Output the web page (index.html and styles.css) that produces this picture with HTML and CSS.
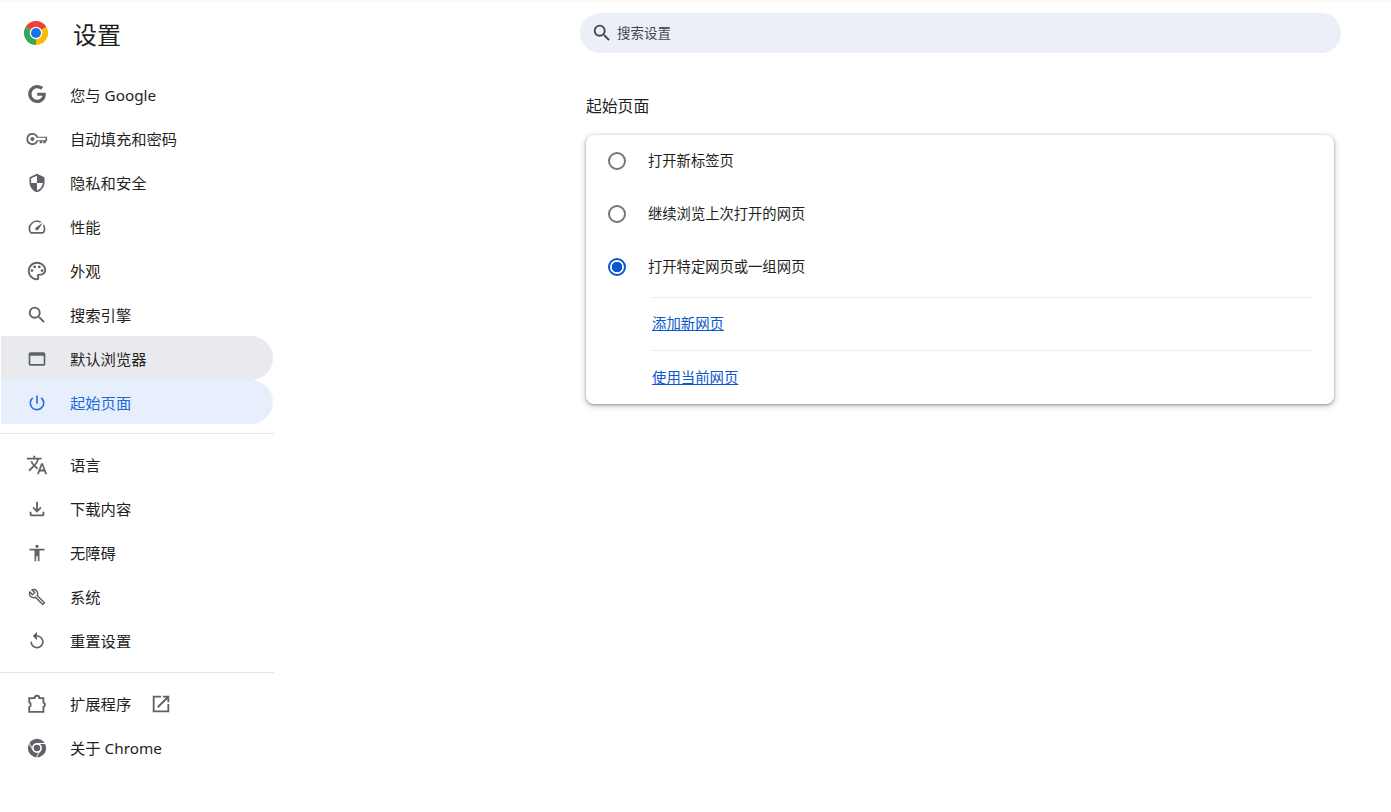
FILE: index.html
```html
<!DOCTYPE html>
<html lang="zh-CN">
<head>
<meta charset="utf-8">
<title>设置</title>
<link rel="stylesheet" href="styles.css">
</head>
<body>
<div class="strip"></div>
<div class="layout">
  <aside class="sidebar">
    <header class="brand">
      <svg class="logo" viewBox="0 0 48 48">
        <path fill="#ea4335" d="M24 24 3.200 12A24 24 0 0 1 44.800 12Z"/>
        <path fill="#34a853" d="M24 24 3.200 12A24 24 0 0 0 24 48Z"/>
        <path fill="#fbbc04" d="M24 24 44.800 12A24 24 0 0 1 24 48Z"/>
        <circle cx="24" cy="24" r="12.500" fill="#fff"/>
        <circle cx="24" cy="24" r="10" fill="#1a73e8"/>
      </svg>
      <h1 class="brand-title">设置</h1>
    </header>
    <nav class="nav">
      <a class="nav-item"><svg class="icon icon-g" viewBox="0 0 24 24"><path d="M12.240 10.285V14.400h6.806c-.275 1.765-2.056 5.174-6.806 5.174-4.095 0-7.439-3.389-7.439-7.574s3.345-7.574 7.439-7.574c2.330 0 3.891.989 4.785 1.849l3.254-3.138C18.189 1.186 15.479 0 12.240 0c-6.635 0-12 5.365-12 12s5.365 12 12 12c6.926 0 11.520-4.869 11.520-11.726 0-.788-.085-1.390-.189-1.989H12.240z"/></svg>您与 Google</a>
      <a class="nav-item"><svg class="icon icon-lg" viewBox="0 0 24 24"><path fill-rule="evenodd" d="M7 5.500a6.500 6.500 0 0 1 6 4h10v5h-1.500v2h-2.700v-2h-1.100v2H15v-2h-2A6.500 6.500 0 1 1 7 5.500Zm0 1.900a4.600 4.600 0 1 0 4.400 6H21.300v-2.800H11.400A4.600 4.600 0 0 0 7 7.400Zm0 2.400a2.200 2.200 0 1 1 0 4.400 2.200 2.200 0 0 1 0-4.400Z"/></svg>自动填充和密码</a>
      <a class="nav-item"><svg class="icon" viewBox="0 0 24 24"><path d="M12 1 3 5v6c0 5.550 3.840 10.740 9 12 5.160-1.260 9-6.450 9-12V5l-9-4zm0 10.990h7c-.53 4.120-3.280 7.790-7 8.940V12H5V6.300l7-3.110v8.800z"/></svg>隐私和安全</a>
      <a class="nav-item"><svg class="icon" viewBox="0 0 24 24"><path d="M20.380 8.570l-1.230 1.850a8 8 0 0 1-.22 7.580H5.070A8 8 0 0 1 15.580 6.850l1.850-1.230A10 10 0 0 0 3.350 19a2 2 0 0 0 1.720 1h13.850a2 2 0 0 0 1.740-1 10 10 0 0 0-.27-10.440zm-9.790 6.840a2 2 0 0 0 2.830 0l5.660-8.490-8.490 5.660a2 2 0 0 0 0 2.830z"/></svg>性能</a>
      <a class="nav-item"><svg class="icon icon-lg" viewBox="0 0 24 24"><path d="M12 22C6.490 22 2 17.510 2 12S6.490 2 12 2s10 4.040 10 9c0 3.310-2.690 6-6 6h-1.770c-.28 0-.5.22-.5.5 0 .12.05.23.13.33.41.47.64 1.060.64 1.670A2.500 2.500 0 0 1 12 22zm0-18c-4.410 0-8 3.590-8 8s3.590 8 8 8c.28 0 .5-.22.5-.5a.54.54 0 0 0-.14-.35c-.41-.46-.63-1.050-.63-1.650a2.500 2.500 0 0 1 2.500-2.500H16c2.210 0 4-1.790 4-4 0-3.860-3.590-7-8-7z"/><circle cx="6.500" cy="11.500" r="1.500"/><circle cx="9.500" cy="7.500" r="1.500"/><circle cx="14.500" cy="7.500" r="1.500"/><circle cx="17.500" cy="11.500" r="1.500"/></svg>外观</a>
      <a class="nav-item"><svg class="icon icon-lg" viewBox="0 0 24 24"><path d="M15.500 14h-.79l-.28-.27A6.471 6.471 0 0 0 16 9.500 6.500 6.500 0 1 0 9.500 16c1.610 0 3.090-.59 4.230-1.570l.27.28v.79l5 4.990L20.490 19l-4.990-5zm-6 0C7.010 14 5 11.990 5 9.500S7.010 5 9.500 5 14 7.010 14 9.500 11.990 14 9.500 14z"/></svg>搜索引擎</a>
      <a class="nav-item is-hover"><svg class="icon" viewBox="0 0 24 24"><path d="M20 4H4c-1.110 0-2 .9-2 2v12c0 1.100.89 2 2 2h16c1.100 0 2-.9 2-2V6c0-1.100-.89-2-2-2zm0 14H4V8h16v10z"/></svg>默认浏览器</a>
      <a class="nav-item is-selected"><svg class="icon" viewBox="0 0 24 24"><path d="M13 3h-2v10h2V3zm4.830 2.170l-1.420 1.420A6.920 6.920 0 0 1 19 12c0 3.870-3.130 7-7 7A6.995 6.995 0 0 1 7.580 6.580L6.170 5.170A8.932 8.932 0 0 0 3 12a9 9 0 0 0 18 0c0-2.740-1.230-5.180-3.170-6.830z"/></svg>起始页面</a>
      <hr class="nav-rule">
      <a class="nav-item"><svg class="icon icon-lg" viewBox="0 0 24 24"><path d="M12.870 15.070l-2.540-2.510.03-.03A17.520 17.520 0 0 0 14.070 6H17V4h-7V2H8v2H1v1.990h11.170C11.500 7.920 10.440 9.750 9 11.350 8.070 10.320 7.300 9.190 6.690 8h-2c.73 1.630 1.730 3.170 2.980 4.560l-5.090 5.020L4 19l5-5 3.110 3.110.76-2.040zM18.500 10h-2L12 22h2l1.120-3h4.750L21 22h2l-4.500-12zm-2.620 7l1.620-4.330L19.120 17h-3.240z"/></svg>语言</a>
      <a class="nav-item"><svg class="icon icon-lg" viewBox="0 0 24 24"><path d="M18 15v3H6v-3H4v3c0 1.100.9 2 2 2h12c1.100 0 2-.9 2-2v-3h-2zm-1-4l-1.410-1.410L13 12.170V4h-2v8.170L8.410 9.590 7 11l5 5 5-5z"/></svg>下载内容</a>
      <a class="nav-item"><svg class="icon" viewBox="0 0 24 24"><path d="M12 2c1.100 0 2 .9 2 2s-.9 2-2 2-2-.9-2-2 .9-2 2-2zm9 7h-6v13h-2v-6h-2v6H9V9H3V7h18v2z"/></svg>无障碍</a>
      <a class="nav-item"><svg class="icon icon-sm" viewBox="0 0 24 24"><path d="M22.610 18.990l-9.080-9.080c.93-2.340.45-5.100-1.440-7C9.790.61 6.210.4 3.660 2.260L7.500 6.110 6.080 7.520 2.250 3.690C.39 6.230.6 9.820 2.900 12.110c1.860 1.860 4.570 2.350 6.890 1.480l9.110 9.110c.39.39 1.020.39 1.410 0l2.300-2.300c.4-.38.4-1.010 0-1.410zm-3 1.600l-9.460-9.460c-.61.45-1.290.72-2 .82-1.360.2-2.790-.21-3.830-1.250C3.370 9.760 2.930 8.500 3 7.260l3.090 3.090 4.240-4.240-3.090-3.090c1.240-.07 2.490.37 3.440 1.310a4.469 4.469 0 0 1 1.240 3.960 4.350 4.350 0 0 1-.88 1.960l9.450 9.450-.88.89z"/></svg>系统</a>
      <a class="nav-item"><svg class="icon" viewBox="0 0 24 24"><path d="M12 5V1L7 6l5 5V7c3.310 0 6 2.690 6 6s-2.690 6-6 6-6-2.690-6-6H4c0 4.420 3.580 8 8 8s8-3.580 8-8-3.580-8-8-8z"/></svg>重置设置</a>
      <hr class="nav-rule nav-rule-low">
      <a class="nav-item"><svg class="icon icon-lg" viewBox="0 0 24 24"><path class="outline" d="M3.500 5.500H9.500A2.500 2.500 0 0 1 14.500 5.500H19V10.500A2.400 2.400 0 0 1 19 15.100V20.500H3.500V15.500A3.100 3.100 0 0 0 3.500 10Z"/></svg>扩展程序<svg class="icon icon-external" viewBox="0 0 24 24"><path d="M19 19H5V5h7V3H3v18h18v-9h-2v7zM14 3v2h3.590l-9.830 9.830 1.410 1.410L19 6.410V10h2V3h-7z"/></svg></a>
      <a class="nav-item"><svg class="icon icon-lg" viewBox="0 0 24 24"><circle cx="12" cy="12" r="10"/><circle cx="12" cy="12" r="5.400" fill="#fff"/><circle cx="12" cy="12" r="3.600"/><path d="M12 6.600H21V7.600H12ZM7.100 14.300 2.700 6.600 3.500 6.100 8 13.800ZM16.500 14 12 21.800 11.200 21.300 15.700 13.500Z" fill="#fff"/></svg>关于 Chrome</a>
    </nav>
  </aside>
  <main class="main">
    <div class="search">
      <svg class="search-icon" viewBox="0 0 24 24"><path d="M15.500 14h-.79l-.28-.27A6.471 6.471 0 0 0 16 9.500 6.500 6.500 0 1 0 9.500 16c1.610 0 3.090-.59 4.230-1.570l.27.28v.79l5 4.990L20.490 19l-4.990-5zm-6 0C7.010 14 5 11.990 5 9.500S7.010 5 9.500 5 14 7.010 14 9.500 11.990 14 9.500 14z"/></svg>
      <span class="search-text">搜索设置</span>
    </div>
    <section class="section">
      <h2 class="section-title">起始页面</h2>
      <div class="card">
        <label class="radio-row"><span class="radio"></span>打开新标签页</label>
        <label class="radio-row"><span class="radio"></span>继续浏览上次打开的网页</label>
        <label class="radio-row"><span class="radio is-checked"></span>打开特定网页或一组网页</label>
        <div class="link-list">
          <a class="link-row"><span class="link">添加新网页</span></a>
          <a class="link-row"><span class="link">使用当前网页</span></a>
        </div>
      </div>
    </section>
  </main>
</div>
</body>
</html>
```
FILE: styles.css
```css
* { box-sizing: border-box; }
html, body { margin: 0; height: 812px; overflow: hidden; background: #fff; }
body {
  font-family: "Noto Sans", "Noto Sans CJK SC", sans-serif;
  color: #1f1f1f;
}
.strip { height: 2px; background: #fdf6f2; }
.layout { display: flex; align-items: flex-start; }
.sidebar { width: 274px; flex: none; }
.brand { display: flex; align-items: center; height: 70px; padding: 0 0 8px 24px; }
.logo { width: 24px; height: 24px; display: block; }
.brand-title { margin: 4px 0 0 25px; font-size: 24px; line-height: 32px; font-weight: 400; }
.nav { display: flex; flex-direction: column; }
.nav-item {
  display: flex; align-items: center;
  width: 272px; height: 44px; margin-left: 1px;
  padding: 2px 0 0 69px;
  font-size: 15.3px; line-height: 20px;
  border-radius: 0 22px 22px 0;
}
.icon { width: 20px; height: 20px; margin: 0 23px 0 -43px; fill: #5f6368; flex: none; }
.icon-lg { width: 22px; height: 22px; margin-left: -44px; margin-right: 22px; }
.icon-sm { width: 18px; height: 18px; margin-left: -42px; margin-right: 24px; }
.icon-g { width: 18px; height: 18px; margin: -2px 24px 0 -42px; }
.icon-external { width: 22px; height: 22px; margin: 0 0 0 19px; }
.outline { fill: none; stroke: #5f6368; stroke-width: 2; }
.is-hover { background: #e8eaed; }
.is-selected { background: #e7effd; color: #1a6ae0; }
.is-selected .icon { fill: #1a73e8; }
.nav-rule { width: 274px; height: 1px; margin: 9px 0 8px; border: 0; background: #e6e7e8; }
.nav-rule-low { margin: 10px 0 8px; }
.main { padding: 11px 0 0 306px; }
.search {
  display: flex; align-items: center;
  width: 761px; height: 40px; padding-left: 11px;
  background: #eceff8; border-radius: 20px;
}
.search-icon { width: 22px; height: 22px; fill: #474747; flex: none; }
.search-text { margin-left: 4px; padding-bottom: 2px; font-size: 13.5px; color: #474747; }
.section { margin: 43px 0 0 6px; width: 748px; }
.section-title { margin: 0 0 18px; font-size: 15.800px; line-height: 21px; font-weight: 400; }
.card {
  height: 269px;
  background: #fff; border-radius: 8px;
  box-shadow: 0 1px 3px 0 rgba(60,64,67,.45), 0 2px 6px 1px rgba(60,64,67,.2);
}
.radio-row { display: flex; align-items: center; height: 53px; padding: 0 0 4px 22px; font-size: 14.3px; }
.radio { width: 18px; height: 18px; margin: 2px 22px 0 0; border: 2px solid #747775; border-radius: 50%; flex: none; }
.radio.is-checked { border-color: #0b57d0; background: radial-gradient(circle, #0b57d0 0 5px, transparent 5.500px); }
.link-list { margin: 3px 22px 0 66px; }
.link-row { display: flex; align-items: center; height: 53px; padding-bottom: 4px; border-top: 1px solid #ececec; font-size: 14.400px; }
.link-row + .link-row { padding-bottom: 2px; }
.link { color: #0b57d0; text-decoration: underline; }
```
